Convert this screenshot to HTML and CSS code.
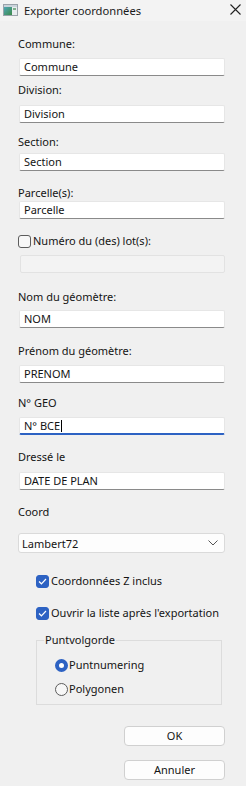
FILE: index.html
```html
<!DOCTYPE html>
<html lang="fr">
<head>
<meta charset="utf-8">
<link rel="stylesheet" href="styles.css">
</head>
<body>
<div class="window">
  <div class="titlebar">
    <svg class="app-icon" width="15" height="12" viewBox="0 0 15 12">
      <rect x="0.5" y="0.5" width="14" height="11" fill="#e8ecef" stroke="#9aa3aa"/>
      <defs><linearGradient id="g" x1="0" y1="0" x2="1" y2="1"><stop offset="0" stop-color="#4fa6b5"/><stop offset="1" stop-color="#3c8a4a"/></linearGradient></defs>
      <rect x="1" y="3" width="8" height="8" fill="url(#g)"/>
      <rect x="1" y="1" width="13" height="2" fill="#c9d3da"/>
      <rect x="10" y="4" width="3" height="2" fill="#7fb08a"/>
    </svg>
    <span class="title">Exporter coordonnées</span>
    <svg class="close" width="11" height="11" viewBox="0 0 11 11"><path d="M0.5 0.5 L10.5 10.5 M10.5 0.5 L0.5 10.5" stroke="#222" stroke-width="1.1"/></svg>
  </div>

  <div class="form">
    <div class="label m15">Commune:</div>
    <div class="input m6">Commune</div>
    <div class="label m6">Division:</div>
    <div class="input m7">Division</div>
    <div class="label m11">Section:</div>
    <div class="input m3">Section</div>
    <div class="label m14">Parcelle(s):</div>
    <div class="input m0">Parcelle</div>
    <div class="check-row m14"><span class="box"></span>Numéro du (des) lot(s):</div>
    <div class="input disabled m6"></div>
    <div class="label m16">Nom du géomètre:</div>
    <div class="input m5">NOM</div>
    <div class="label m15">Prénom du géomètre:</div>
    <div class="input m6">PRENOM</div>
    <div class="label m12">N° GEO</div>
    <div class="input focus m6">N° BCE<span class="caret"></span></div>
    <div class="label m14">Dressé le</div>
    <div class="input m7">DATE DE PLAN</div>
    <div class="label m14">Coord</div>
    <div class="combo m13"><span>Lambert72</span>
      <svg width="10" height="6" viewBox="0 0 10 6"><path d="M0.5 0.5 L5 5 L9.5 0.5" fill="none" stroke="#555" stroke-width="1"/></svg>
    </div>

    <div class="options">
      <div class="check-row m20"><span class="box checked"><svg width="9" height="7" viewBox="0 0 9 7"><path d="M1 3.5 L3.4 5.8 L8 1" fill="none" stroke="#fff" stroke-width="1.2"/></svg></span>Coordonnées Z inclus</div>
      <div class="check-row m16"><span class="box checked"><svg width="9" height="7" viewBox="0 0 9 7"><path d="M1 3.5 L3.4 5.8 L8 1" fill="none" stroke="#fff" stroke-width="1.2"/></svg></span>Ouvrir la liste après l'exportation</div>
      <fieldset class="group">
        <legend>Puntvolgorde</legend>
        <div class="radio-row first"><span class="radio on"></span>Puntnumering</div>
        <div class="radio-row second"><span class="radio"></span>Polygonen</div>
      </fieldset>
    </div>

    <div class="buttons">
      <div class="btn">OK</div>
      <div class="btn">Annuler</div>
    </div>
  </div>
</div>
</body>
</html>
```

FILE: styles.css
```css
* { box-sizing: border-box; }
html, body { margin: 0; padding: 0; }
body {
  background: #f0f0f0;
  font-family: "Noto Sans", "Open Sans", sans-serif;
  font-size: 11px;
  color: #141414;
  width: 246px;
  height: 786px;
  overflow: hidden;
  white-space: nowrap;
}
.window { width: 246px; }
.titlebar {
  height: 21px;
  background: #f3f3f3;
  display: flex;
  align-items: center;
  padding: 0 4px 0 3px;
}
.app-icon { flex: none; margin-top: -1px; }
.title { margin-left: 6px; font-size: 11.2px; line-height: 16px; color: #1a1a1a; flex: 1; }
.close { flex: none; margin-right: 1px; margin-top: -2px; }

.form {
  padding: 0 21px 0 18px;
  display: flex;
  flex-direction: column;
}
.label { line-height: 16px; height: 16px; }
.input {
  height: 18px;
  margin-left: 1px;
  background: #fff;
  border: 1px solid #e6e6e6;
  border-bottom: 1px solid #8a8a8a;
  border-radius: 2px;
  padding: 0 4px;
  line-height: 16px;
  display: flex;
  align-items: center;
}
.input.disabled {
  background: #f3f3f3;
  border: 1px solid #e2e2e2;
  margin-left: 2px;
}
.input.focus { border-bottom: 2px solid #2d62c3; }
.caret { display: inline-block; width: 1px; height: 12px; background: #000; margin-left: 1px; }

.combo {
  height: 20px;
  background: #fdfdfd;
  border: 1px solid #dadada;
  border-radius: 3px;
  display: flex;
  align-items: center;
  justify-content: space-between;
  padding: 0 6px 0 3px;
}

.check-row { display: flex; align-items: center; line-height: 16px; height: 16px; }
.box {
  width: 13px; height: 13px; flex: none;
  border: 1px solid #5c5c5c;
  border-radius: 3px;
  background: #f7f7f7;
  margin-right: 2px;
  display: flex; align-items: center; justify-content: center;
}
.box.checked { background: #2d62c3; border-color: #2d62c3; }

.options { padding-left: 18px; display: flex; flex-direction: column; }
.group {
  margin: 11px 3px 0 0;
  padding: 0 0 0 18px;
  border: 1px solid #dcdcdc;
  border-radius: 0;
  height: 73px;
  min-width: 0;
}
.group legend { padding: 0 1px; margin-left: -11px; line-height: 16px; }
.radio-row { display: flex; align-items: center; height: 16px; line-height: 16px; }
.radio-row.first { margin-top: 9px; }
.radio-row.second { margin-top: 8px; }
.radio {
  width: 13px; height: 13px; flex: none;
  border: 1px solid #5c5c5c; border-radius: 50%;
  background: #f7f7f7; margin-right: 1px;
}
.radio.on { border: 4px solid #2d62c3; background: #fff; }

.buttons { display: flex; flex-direction: column; align-items: flex-end; margin-top: 21px; }
.btn {
  width: 101px; height: 20px;
  background: #fdfdfd;
  border: 1px solid #d0d0d0;
  border-radius: 4px;
  text-align: center;
  line-height: 18px;
  margin-right: 0;
}
.btn + .btn { margin-top: 14px; }

.m0 { margin-top: 0; }
.m3 { margin-top: 3px; }
.m5 { margin-top: 5px; }
.m6 { margin-top: 6px; }
.m7 { margin-top: 7px; }
.m11 { margin-top: 11px; }
.m12 { margin-top: 12px; }
.m13 { margin-top: 13px; }
.m14 { margin-top: 14px; }
.m15 { margin-top: 15px; }
.m16 { margin-top: 16px; }
.m20 { margin-top: 20px; }
```
